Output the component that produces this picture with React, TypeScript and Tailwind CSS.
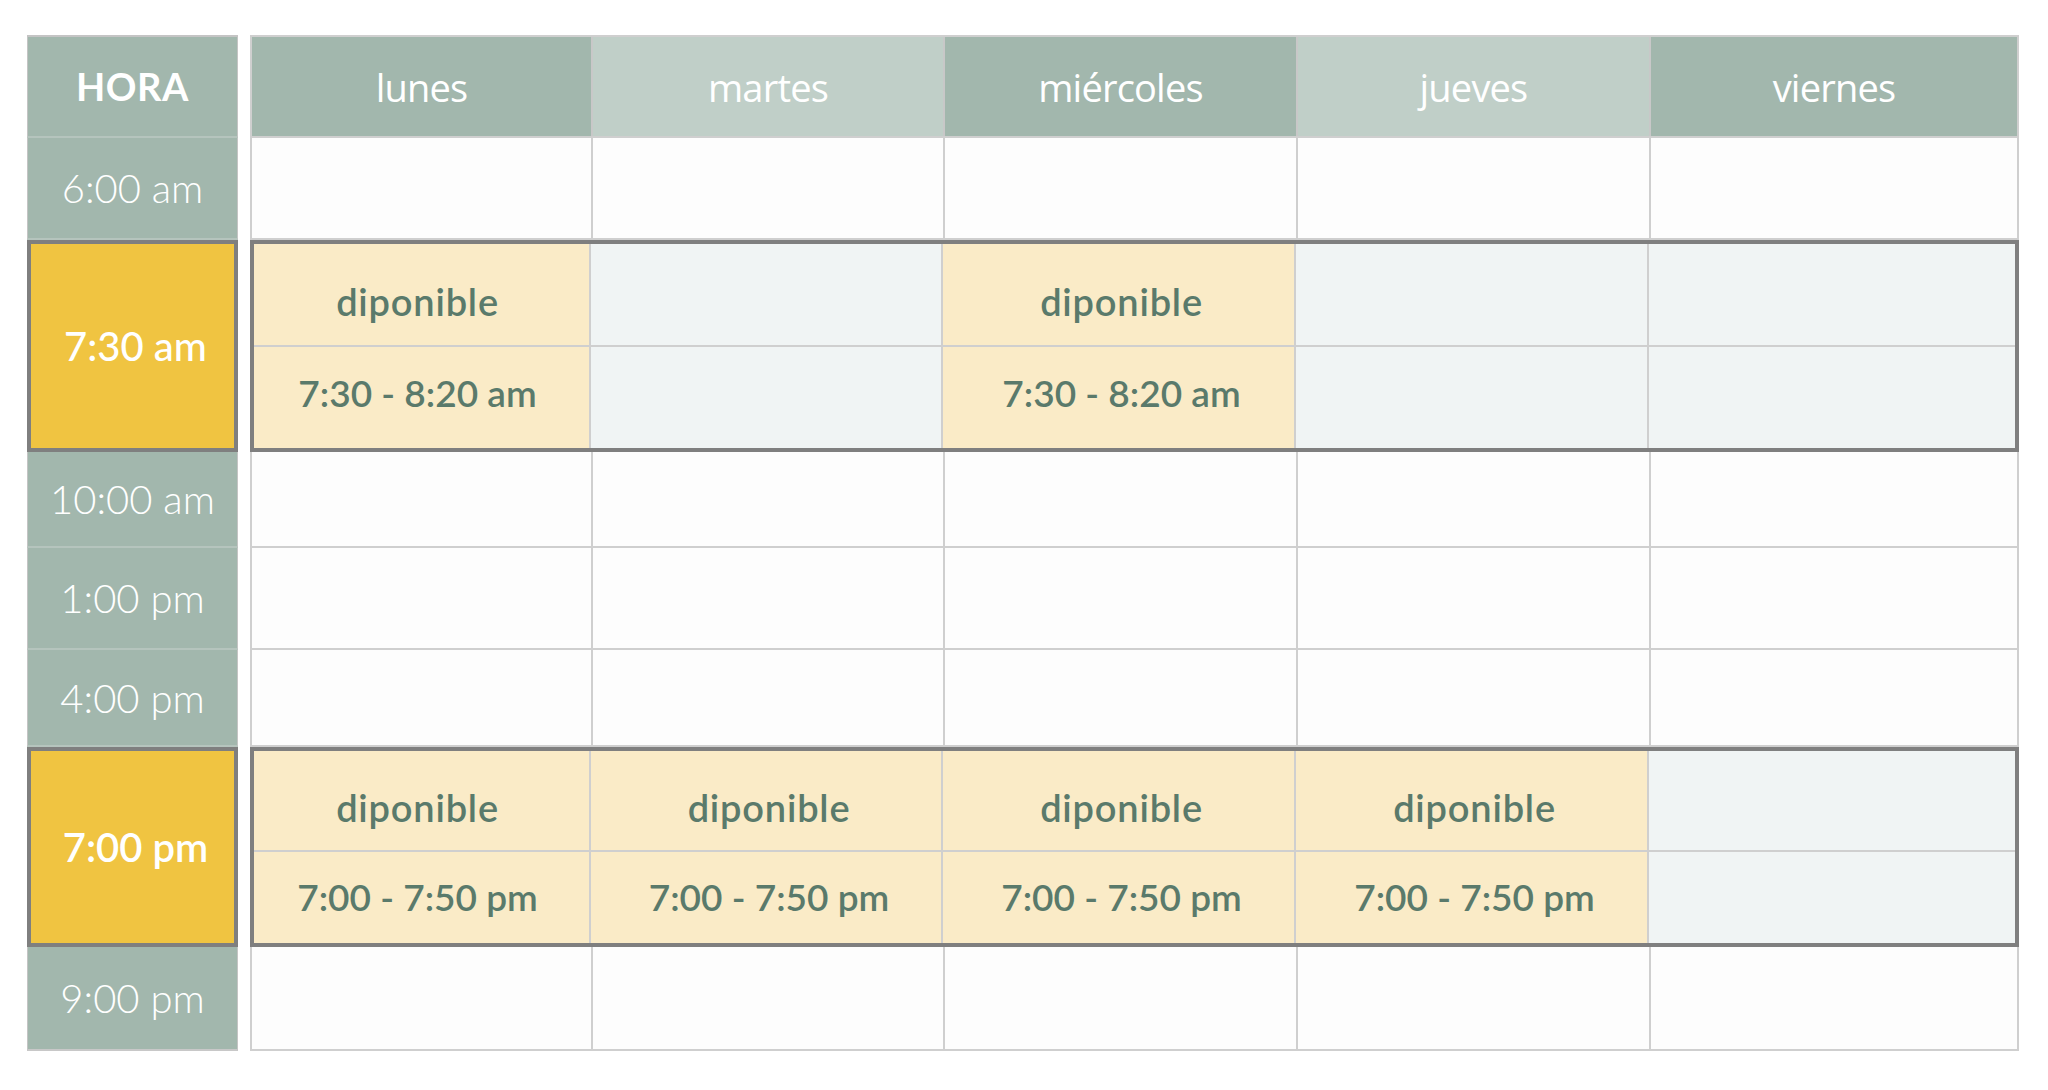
import React from "react";

const SAGE = "bg-[#a2b7ad]";
const LSAGE = "bg-[#c0cfc8]";

const days = [
  { name: "lunes", bg: SAGE },
  { name: "martes", bg: LSAGE },
  { name: "miércoles", bg: SAGE },
  { name: "jueves", bg: LSAGE },
  { name: "viernes", bg: SAGE },
];

const colsNormal = "grid grid-cols-[341px_352px_353px_353px_1fr]";
const colsBlock = "grid grid-cols-[337px_352px_353px_353px_1fr]";

function TimeCell({ label, h, last }: { label: string; h: string; last?: boolean }) {
  return (
    <div
      className={`${h} ${SAGE} flex items-center justify-center border-x border-[#c4c4c4] ${
        last ? "border-b-2 border-b-[#c8c8c8]" : "border-b-2 border-b-[#b5c4bd]"
      }`}
    >
      <span className="font-['Lato'] font-light text-[40px] text-white tracking-[0px]">{label}</span>
    </div>
  );
}

function HighlightTime({ label, h, weight }: { label: string; h: string; weight: string }) {
  return (
    <div className={`${h} bg-[#f0c441] border-4 border-[#7f7f7f] flex items-center justify-center`}>
      <span className={`font-['Lato'] ${weight} text-[40px] text-white tracking-[0px] translate-x-[3px]`}>
        {label}
      </span>
    </div>
  );
}

function EmptyRow({ h }: { h: string }) {
  return (
    <div className={`${colsNormal} ${h} border-b-2 border-[#cfcfcf]`}>
      {days.map((d, i) => (
        <div
          key={d.name}
          className={`bg-[#fdfdfd] ${i < 4 ? "border-r-2 border-[#cfcfcf]" : ""}`}
        />
      ))}
    </div>
  );
}

function BlockRow({
  hTop,
  hBot,
  padTop,
  padBot,
  avail,
  times,
}: {
  hTop: string;
  hBot: string;
  padTop: string;
  padBot: string;
  avail: boolean[];
  times: string;
}) {
  const base = "font-['Lato'] font-semibold text-[#5a7a6b]";
  return (
    <div className="border-4 border-[#7f7f7f]">
      <div className={`${colsBlock} ${hTop} border-b-2 border-[#cfcfcf]`}>
        {avail.map((a, i) => (
          <div
            key={i}
            className={`${a ? "bg-[#faebc7]" : "bg-[#f0f4f4]"} ${
              i < 4 ? "border-r-2 border-[#cfcfcf]" : ""
            } flex items-center justify-center ${padTop}`}
          >
            {a && (
              <span className={`${base} text-[38px] tracking-[0.8px] ${i === 0 ? "-translate-x-[4px]" : "translate-x-[3px]"}`}>
                diponible
              </span>
            )}
          </div>
        ))}
      </div>
      <div className={`${colsBlock} ${hBot}`}>
        {avail.map((a, i) => (
          <div
            key={i}
            className={`${a ? "bg-[#faebc7]" : "bg-[#f0f4f4]"} ${
              i < 4 ? "border-r-2 border-[#cfcfcf]" : ""
            } flex items-center justify-center ${padBot}`}
          >
            {a && (
              <span className={`${base} text-[37px] tracking-[0px] ${i === 0 ? "-translate-x-[4px]" : "translate-x-[3px]"}`}>
                {times}
              </span>
            )}
          </div>
        ))}
      </div>
    </div>
  );
}

export default function App() {
  return (
    <div className="w-[2048px] h-[1090px] bg-white flex items-start pl-[27px] pt-[35px] gap-[12px]">
      {/* HORA column */}
      <div className="w-[211px] flex flex-col">
        <div className={`h-[103px] ${SAGE} border-t-2 border-x border-[#c4c4c4] border-b-2 border-b-[#b5c4bd] flex items-center justify-center`}>
          <span className="font-['Lato'] font-bold text-[38px] text-white tracking-[0.5px]">HORA</span>
        </div>
        <TimeCell label="6:00 am" h="h-[102px]" />
        <HighlightTime label="7:30 am" h="h-[212px]" weight="font-medium" />
        <TimeCell label="10:00 am" h="h-[96px]" />
        <TimeCell label="1:00 pm" h="h-[102px]" />
        <TimeCell label="4:00 pm" h="h-[97px]" />
        <HighlightTime label="7:00 pm" h="h-[200px]" weight="font-semibold" />
        <TimeCell label="9:00 pm" h="h-[104px]" last />
      </div>

      {/* Days table */}
      <div className="w-[1769px] flex flex-col border-x-2 border-[#cfcfcf]">
        <div className={`${colsNormal} h-[103px] border-t-2 border-b-2 border-[#cfcfcf]`}>
          {days.map((d, i) => (
            <div
              key={d.name}
              className={`${d.bg} ${i < 4 ? "border-r-2 border-[#c8c8c8]" : ""} flex items-center justify-center pt-[2px]`}
            >
              <span className="font-['Open_Sans'] font-medium text-[38px] text-white tracking-[-0.8px]">
                {d.name}
              </span>
            </div>
          ))}
        </div>
        <EmptyRow h="h-[102px]" />
        <div className="-mx-[2px]">
          <BlockRow
            hTop="h-[103px]"
            hBot="h-[101px]"
            padTop="pt-[14px]"
            padBot="pb-[10px]"
            avail={[true, false, true, false, false]}
            times="7:30 - 8:20 am"
          />
        </div>
        <EmptyRow h="h-[96px]" />
        <EmptyRow h="h-[102px]" />
        <EmptyRow h="h-[97px]" />
        <div className="-mx-[2px]">
          <BlockRow
            hTop="h-[101px]"
            hBot="h-[91px]"
            padTop="pt-[14px]"
            padBot="pb-[2px]"
            avail={[true, true, true, true, false]}
            times="7:00 - 7:50 pm"
          />
        </div>
        <EmptyRow h="h-[104px]" />
      </div>
    </div>
  );
}
